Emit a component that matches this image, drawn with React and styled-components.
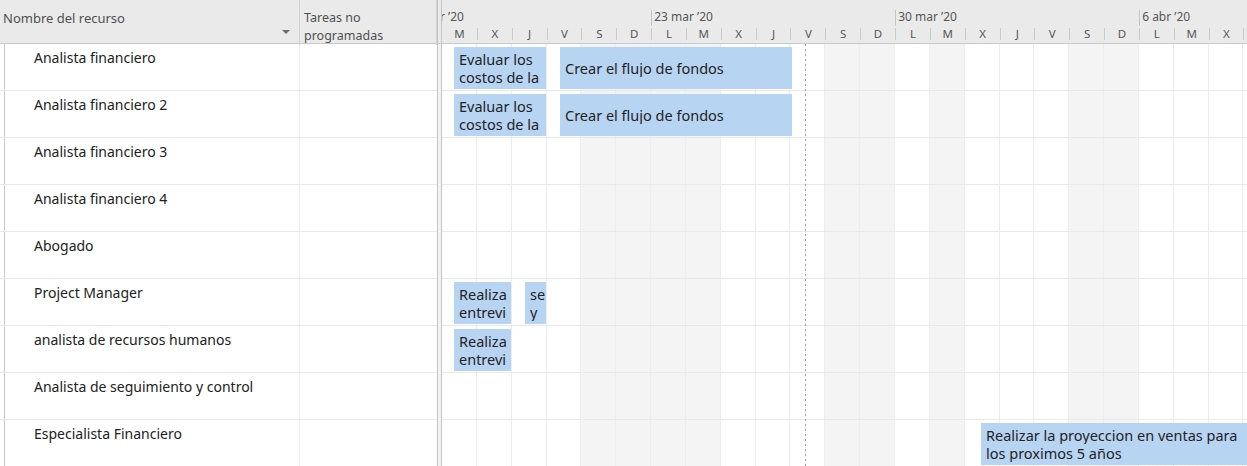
import React from 'react';
import styled, { createGlobalStyle } from 'styled-components';

const DAY = 244 / 7;
const ROW_H = 47;
const DAY_COUNT = 24;

const days = [
  { l: 'M' }, { l: 'X' }, { l: 'J' }, { l: 'V' }, { l: 'S', off: true }, { l: 'D', off: true },
  { l: 'L', off: true }, { l: 'M', off: true }, { l: 'X' }, { l: 'J' }, { l: 'V' }, { l: 'S', off: true },
  { l: 'D', off: true }, { l: 'L' }, { l: 'M', off: true }, { l: 'X' }, { l: 'J' }, { l: 'V' },
  { l: 'S', off: true }, { l: 'D', off: true }, { l: 'L' }, { l: 'M' }, { l: 'X' }, { l: 'J' },
];

const weeks = ['16 mar \u201920', '23 mar \u201920', '30 mar \u201920', '6 abr \u201920'];

const resources = [
  {
    name: 'Analista financiero',
    bars: [
      { start: 12, width: 92, lines: ['Evaluar los', 'costos de la'] },
      { start: 118, width: 232, lines: ['Crear el flujo de fondos'] },
    ],
  },
  {
    name: 'Analista financiero 2',
    bars: [
      { start: 12, width: 92, lines: ['Evaluar los', 'costos de la'] },
      { start: 118, width: 232, lines: ['Crear el flujo de fondos'] },
    ],
  },
  { name: 'Analista financiero 3', bars: [] },
  { name: 'Analista financiero 4', bars: [] },
  { name: 'Abogado', bars: [] },
  {
    name: 'Project Manager',
    bars: [
      { start: 12, width: 57, lines: ['Realiza', 'entrevi'] },
      { start: 83, width: 21, lines: ['se', 'y'] },
    ],
  },
  {
    name: 'analista de recursos humanos',
    bars: [{ start: 12, width: 57, lines: ['Realiza', 'entrevi'] }],
  },
  { name: 'Analista de seguimiento y control', bars: [] },
  {
    name: 'Especialista Financiero',
    bars: [
      {
        start: 539,
        width: 320,
        lines: ['Realizar la proyeccion en ventas para', 'los proximos 5 años'],
      },
    ],
  },
];

const GlobalStyle = createGlobalStyle`
  html, body { margin: 0; padding: 0; background: #ffffff; }
  body {
    font-family: "Noto Sans", "Open Sans", sans-serif;
    overflow: hidden;
  }
  * { box-sizing: border-box; }
`;

const View = styled.div`
  display: flex;
  width: 1247px;
  height: 466px;
  overflow: hidden;
  background: #ffffff;
`;

/* ---------- resource sheet ---------- */

const Sheet = styled.div`
  flex: none;
  width: 437px;
  display: flex;
  flex-direction: column;
`;

const SheetHeader = styled.div`
  flex: none;
  height: 44px;
  display: grid;
  grid-template-columns: 300px 137px;
  background: #eaeaea;
  border-bottom: 1px solid #c9c9c9;
`;

const HeaderCell = styled.div`
  position: relative;
  padding: ${(p) => (p.$wrap ? '9px 4px 0 4px' : '9px 3px 0 3px')};
  font-size: ${(p) => (p.$wrap ? '12.5px' : '13px')};
  line-height: 18px;
  color: #505050;
  border-right: 1px solid #d2d2d2;
`;

const SortArrow = styled.span`
  position: absolute;
  right: 9px;
  top: 30px;
  width: 0;
  height: 0;
  border-left: 4px solid transparent;
  border-right: 4px solid transparent;
  border-top: 4px solid #6d6d6d;
`;

const SheetRow = styled.div`
  flex: none;
  height: ${ROW_H}px;
  display: grid;
  grid-template-columns: 5px 295px 137px;
  border-bottom: 1px solid #e8e8e8;
`;

const RowGutter = styled.div`
  border-right: 1px solid #c8c8c8;
`;

const NameCell = styled.div`
  padding: 5px 0 0 29px;
  font-size: 14px;
  line-height: 18px;
  color: #222222;
  white-space: nowrap;
  overflow: hidden;
  border-right: 1px solid #ececec;
`;

const EmptyCell = styled.div``;

const Splitter = styled.div`
  flex: none;
  width: 5px;
  display: flex;
  flex-direction: column;
  border-left: 1px solid #c4c4c4;
  border-right: 1px solid #c4c4c4;
`;

const SplitterTop = styled.div`
  flex: none;
  height: 44px;
  background: #eaeaea;
  border-bottom: 1px solid #c9c9c9;
`;

const SplitterRest = styled.div`
  flex: 1;
  background: #f3f3f3;
`;

/* ---------- timescale ---------- */

const Chart = styled.div`
  flex: 1;
  min-width: 0;
  display: flex;
  flex-direction: column;
  overflow: hidden;
`;

const Timescale = styled.div`
  flex: none;
  height: 44px;
  background: #eaeaea;
  border-bottom: 1px solid #c9c9c9;
  display: flex;
  flex-direction: column;
  overflow: hidden;
`;

const WeekTier = styled.div`
  flex: none;
  height: 28px;
  display: flex;
  margin-left: ${-DAY}px;
`;

const WeekCell = styled.div`
  flex: none;
  width: ${7 * DAY}px;
  height: 16px;
  margin-top: 10px;
  padding-left: ${(p) => (p.$lead ? '0' : '2px')};
  text-indent: ${(p) => (p.$lead ? '-3px' : '0')};
  border-left: 1px solid #c6c6c6;
  font-size: 12px;
  line-height: 14px;
  color: #575757;
  white-space: nowrap;
`;

const DayTier = styled.div`
  flex: none;
  display: flex;
`;

const DayCell = styled.div`
  flex: none;
  width: ${DAY}px;
  height: 12px;
  border-left: ${(p) => (p.$first ? 'none' : '1px solid #c9c9c9')};
  font-size: 11.5px;
  line-height: 12px;
  text-align: center;
  color: #575757;
`;

/* ---------- gantt body ---------- */

const ChartBody = styled.div`
  position: relative;
  flex: 1;
  display: grid;
  grid-template-columns: repeat(${DAY_COUNT}, ${DAY}px);
  grid-template-rows: repeat(${resources.length}, ${ROW_H}px);
`;

const DayColumn = styled.div`
  grid-row: 1 / -1;
  background: ${(p) => (p.$off ? '#f4f4f4' : '#ffffff')};
  border-right: 1px solid #ededed;
`;

const ChartRow = styled.div`
  position: relative;
  grid-column: 1 / -1;
  border-bottom: 1px solid #e8e8e8;
`;

const Bar = styled.div`
  position: absolute;
  top: 3px;
  height: 42px;
  display: flex;
  flex-direction: column;
  justify-content: center;
  padding: 0 0 0 5px;
  background: #b8d4f3;
  overflow: hidden;
`;

const BarLine = styled.span`
  display: block;
  font-size: 14.5px;
  line-height: 18px;
  color: #232323;
  white-space: nowrap;
  overflow: hidden;
`;

const StatusLine = styled.div`
  position: absolute;
  top: 0;
  bottom: 0;
  width: 1px;
  background: repeating-linear-gradient(
    to bottom,
    #9c9c9c 0,
    #9c9c9c 2px,
    transparent 2px,
    transparent 5px
  );
  pointer-events: none;
`;

export default function App() {
  return (
    <>
      <GlobalStyle />
      <View>
        <Sheet>
          <SheetHeader>
            <HeaderCell>
              Nombre del recurso
              <SortArrow />
            </HeaderCell>
            <HeaderCell $wrap>
              Tareas no
              <br />
              programadas
            </HeaderCell>
          </SheetHeader>
          {resources.map((r) => (
            <SheetRow key={r.name}>
              <RowGutter />
              <NameCell>{r.name}</NameCell>
              <EmptyCell />
            </SheetRow>
          ))}
        </Sheet>

        <Splitter>
          <SplitterTop />
          <SplitterRest />
        </Splitter>

        <Chart>
          <Timescale>
            <WeekTier>
              {weeks.map((w, i) => (
                <WeekCell key={w} $lead={i === 0}>
                  {w}
                </WeekCell>
              ))}
            </WeekTier>
            <DayTier>
              {days.map((d, i) => (
                <DayCell key={i} $first={i === 0}>
                  {d.l}
                </DayCell>
              ))}
            </DayTier>
          </Timescale>

          <ChartBody>
            {days.map((d, i) => (
              <DayColumn key={i} $off={d.off} style={{ gridColumn: i + 1 }} />
            ))}
            {resources.map((r, i) => (
              <ChartRow key={r.name} style={{ gridRow: i + 1 }}>
                {r.bars.map((b, j) => (
                  <Bar key={j} style={{ left: b.start, width: b.width }}>
                    {b.lines.map((t) => (
                      <BarLine key={t}>{t}</BarLine>
                    ))}
                  </Bar>
                ))}
              </ChartRow>
            ))}
            <StatusLine style={{ left: 10.4 * DAY }} />
          </ChartBody>
        </Chart>
      </View>
    </>
  );
}
